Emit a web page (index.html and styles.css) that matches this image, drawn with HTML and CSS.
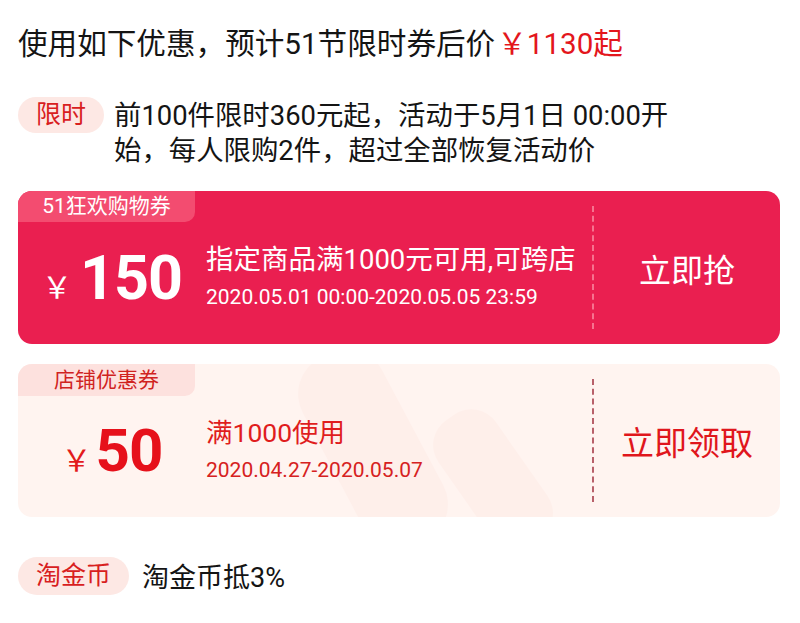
FILE: index.html
```html
<!DOCTYPE html>
<html lang="zh-CN">
<head>
<meta charset="utf-8">
<title>优惠</title>
<link rel="stylesheet" href="styles.css">
</head>
<body>
<div class="page">
  <div class="title">使用如下优惠，预计51节限时券后价<span class="price">￥1130起</span></div>

  <div class="row limit-row">
    <span class="pill">限时</span>
    <p class="limit-text">前100件限时360元起，活动于5月1日 00:00开始，每人限购2件，超过全部恢复活动价</p>
  </div>

  <div class="card card-red">
    <span class="card-tag">51狂欢购物券</span>
    <div class="amount"><span class="yen">￥</span><span class="num">150</span></div>
    <div class="info">
      <div class="cond">指定商品满1000元可用,可跨店</div>
      <div class="date">2020.05.01 00:00-2020.05.05 23:59</div>
    </div>
    <div class="divider"></div>
    <div class="action">立即抢</div>
  </div>

  <div class="card card-light">
    <svg class="watermark" width="420" height="153" viewBox="0 0 420 153">
      <g fill="#fde9e2" opacity="0.4">
        <rect x="120" y="-20" width="90" height="210" rx="40" transform="rotate(-28 165 85)"/>
        <rect x="250" y="40" width="70" height="150" rx="30" transform="rotate(-35 285 115)"/>
      </g>
    </svg>
    <span class="card-tag">店铺优惠券</span>
    <div class="amount"><span class="yen">￥</span><span class="num">50</span></div>
    <div class="info">
      <div class="cond">满1000使用</div>
      <div class="date">2020.04.27-2020.05.07</div>
    </div>
    <div class="divider"></div>
    <div class="action">立即领取</div>
  </div>

  <div class="row coin-row">
    <span class="pill">淘金币</span>
    <span class="coin-text">淘金币抵3%</span>
  </div>
</div>
</body>
</html>
```

FILE: styles.css
```css
html, body {
  margin: 0;
  padding: 0;
  background: #ffffff;
}
body {
  font-family: "Roboto", "Noto Sans CJK SC", sans-serif;
  color: #141414;
}
.page {
  padding: 24px 20px 0 18px;
}
.title {
  font-size: 29.6px;
  line-height: 40px;
  white-space: nowrap;
}
.price {
  color: #e3161c;
  margin-left: 2px;
}
.row {
  display: flex;
  align-items: flex-start;
}
.limit-row {
  margin-top: 33px;
}
.pill {
  flex: none;
  height: 36px;
  line-height: 36px;
  padding: 0 18px;
  border-radius: 18px;
  background: #fde8e4;
  color: #d8201e;
  font-size: 25px;
}
.limit-text {
  margin: 2px 0 0 10px;
  max-width: 575px;
  font-size: 27.4px;
  line-height: 35px;
}
.card {
  position: relative;
  display: flex;
  height: 153px;
  border-radius: 14px;
  overflow: hidden;
  margin-top: 22px;
}
.card + .card {
  margin-top: 20px;
}
.card-red {
  background: #ea1f50;
  color: #ffffff;
}
.card-light {
  background: #fff4f0;
  color: #e31a1c;
}
.watermark {
  position: absolute;
  left: 190px;
  top: 0;
}
.card-tag {
  position: absolute;
  left: 0;
  top: 0;
  width: 177px;
  height: 31px;
  line-height: 31px;
  text-align: center;
  font-size: 21px;
  border-bottom-right-radius: 10px;
}
.card-red .card-tag {
  background: #f34c70;
  color: #ffffff;
}
.card-light .card-tag {
  background: #fde1de;
  color: #d0231f;
  height: 32px;
  line-height: 32px;
}
.amount {
  position: relative;
  flex: none;
  width: 188px;
  padding-top: 21px;
  box-sizing: border-box;
  display: flex;
  align-items: center;
  justify-content: center;
}
.yen {
  font-size: 30px;
  margin-right: 8px;
  margin-top: 14px;
}
.num {
  font-size: 61px;
  font-weight: 700;
  line-height: 70px;
  letter-spacing: -1px;
}
.card-light .num {
  color: #e6111b;
  font-size: 60px;
}
.card-light .yen {
  margin-right: 4px;
}
.info {
  position: relative;
  flex: 1;
  padding-top: 21px;
  display: flex;
  flex-direction: column;
  justify-content: center;
}
.cond {
  font-size: 27.5px;
  line-height: 36px;
}
.date {
  font-size: 21px;
  line-height: 34px;
  margin-top: 2px;
}
.card-light .cond {
  color: #e01d1d;
  font-size: 26.5px;
}
.card-light .date {
  color: #d62121;
}
.divider {
  position: relative;
  flex: none;
  width: 0;
  margin: 15px 0;
  border-left: 2px dashed #f6738f;
}
.card-light .divider {
  border-left-color: #b8606a;
}
.action {
  position: relative;
  flex: none;
  width: 186px;
  display: flex;
  align-items: center;
  justify-content: center;
  font-size: 32px;
}
.card-light .action {
  color: #e0161c;
  font-size: 33px;
}
.coin-row {
  margin-top: 39px;
  align-items: center;
}
.coin-row .pill {
  height: 38px;
  line-height: 38px;
  border-radius: 19px;
}
.coin-text {
  margin-left: 13px;
  font-size: 27px;
}
```
